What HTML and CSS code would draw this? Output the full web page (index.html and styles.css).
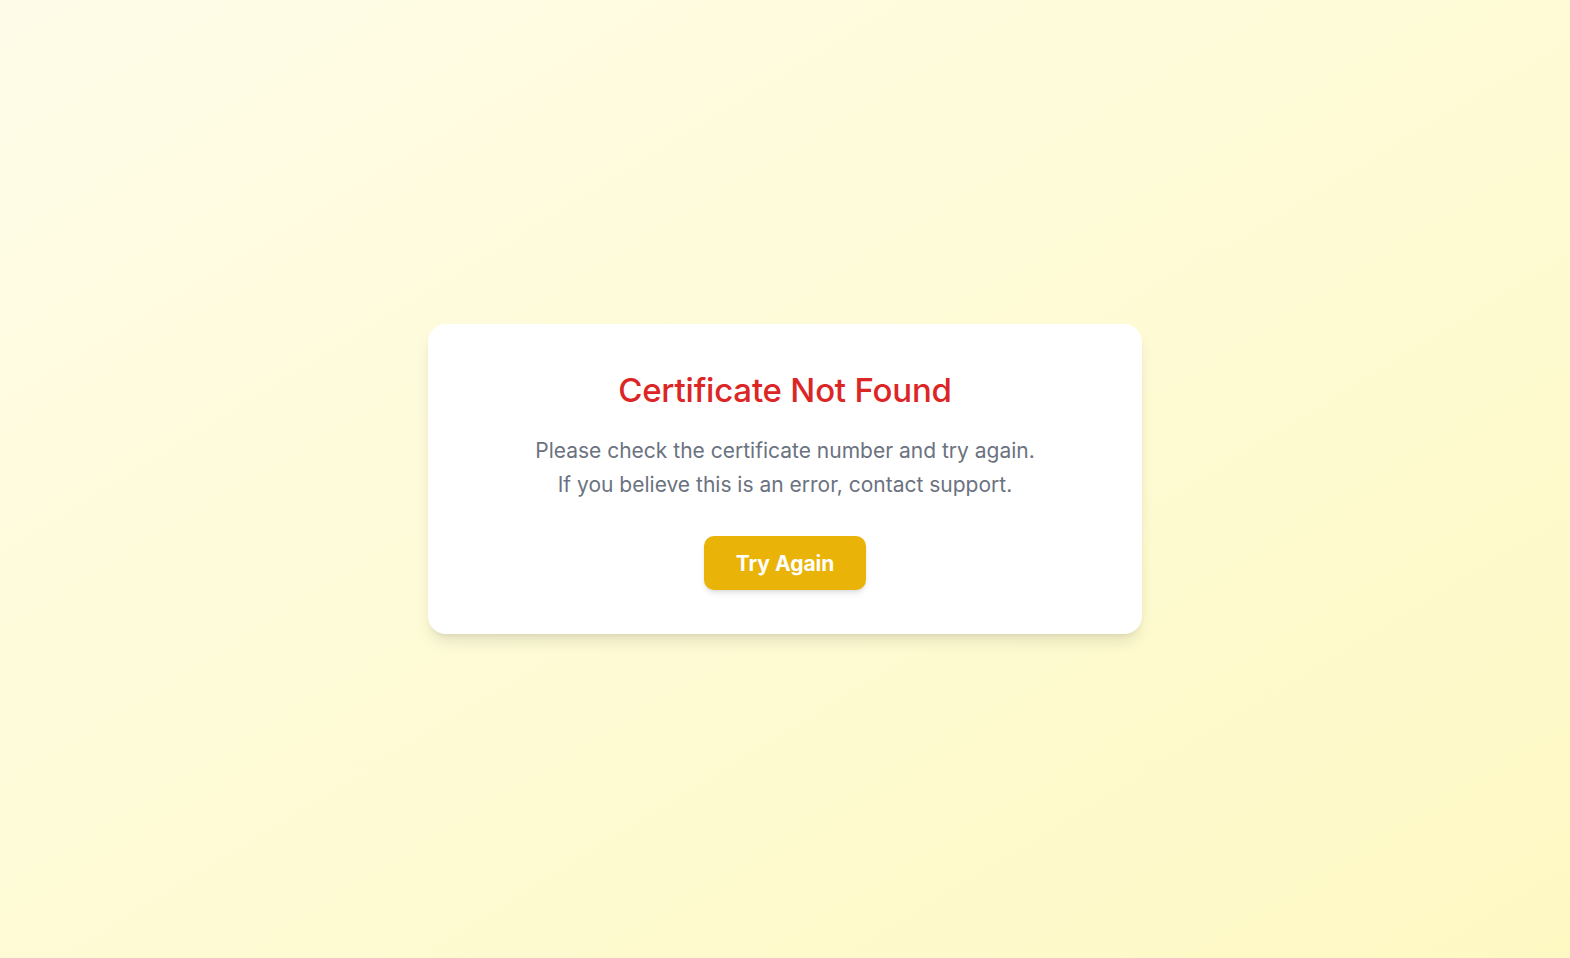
FILE: index.html
```html
<!DOCTYPE html>
<html lang="en">
<head>
<meta charset="utf-8">
<title>Certificate Not Found</title>
<link rel="stylesheet" href="styles.css">
</head>
<body>
<main class="page">
  <section class="card">
    <h1 class="title">Certificate Not Found</h1>
    <p class="message">Please check the certificate number and try again.<br>If you believe this is an error, contact support.</p>
    <button class="btn" type="button">Try Again</button>
  </section>
</main>
</body>
</html>
```

FILE: styles.css
```css
* { box-sizing: border-box; }
html, body { margin: 0; padding: 0; }
body {
  font-family: "Inter", "Noto Sans", sans-serif;
  background: linear-gradient(to bottom right, #fefce8, #fef9c3);
  min-height: 100vh;
}
.page {
  min-height: 100vh;
  display: flex;
  align-items: center;
  justify-content: center;
}
.card {
  width: 714px;
  background: #ffffff;
  border-radius: 18px;
  box-shadow: 0 10px 15px -3px rgba(0,0,0,0.1), 0 4px 6px -4px rgba(0,0,0,0.1);
  padding: 48px 40px 44px;
  display: flex;
  flex-direction: column;
  align-items: center;
  text-align: center;
}
.title {
  margin: 0 0 26px;
  color: #dc2626;
  font-size: 33px;
  line-height: 36px;
  font-weight: 500;
  letter-spacing: -0.2px;
}
.message {
  margin: 0 0 34px;
  color: #6b7280;
  font-size: 21px;
  line-height: 34px;
}
.btn {
  font-family: inherit;
  background: #eab308;
  color: #ffffff;
  border: none;
  border-radius: 10px;
  width: 162px;
  height: 54px;
  font-size: 21px;
  font-weight: 700;
  box-shadow: 0 4px 6px -1px rgba(0,0,0,0.1), 0 2px 4px -2px rgba(0,0,0,0.1);
}
```
